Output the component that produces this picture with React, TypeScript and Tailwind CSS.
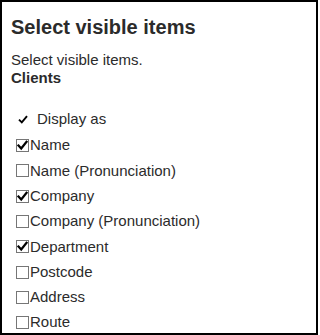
import React from "react";

const items: { label: string; checked: boolean }[] = [
  { label: "Name", checked: true },
  { label: "Name (Pronunciation)", checked: false },
  { label: "Company", checked: true },
  { label: "Company (Pronunciation)", checked: false },
  { label: "Department", checked: true },
  { label: "Postcode", checked: false },
  { label: "Address", checked: false },
  { label: "Route", checked: false },
];

function Box({ checked }: { checked: boolean }) {
  return (
    <span className="flex h-[13px] w-[13px] shrink-0 items-center justify-center border border-[#767676] bg-white">
      {checked && (
        <svg width="11" height="11" viewBox="0 0 11 11">
          <path d="M1.5 5.5 L4.2 8.5 L9.5 1.8" fill="none" stroke="#000" strokeWidth="2.2" strokeLinecap="square" strokeLinejoin="miter" />
        </svg>
      )}
    </span>
  );
}

export default function App() {
  return (
    <div
      className="box-border h-[335px] w-[318px] overflow-hidden border-2 border-black bg-white px-[9px] text-[#2b2b2b]"
      style={{ fontFamily: '"Liberation Sans", Arial, sans-serif' }}
    >
      <h2 className="mt-[13px] text-[20px] font-bold leading-[24px]">Select visible items</h2>
      <p className="mt-[12px] text-[15px] leading-[18px]">Select visible items.</p>
      <p className="text-[15px] font-bold leading-[18px]">Clients</p>
      <div className="mt-[20px] flex h-[25px] items-center text-[15px]">
        <svg className="ml-[7px] mr-[9px]" width="10" height="9" viewBox="0 0 10 9">
          <path d="M1 4.6 L3.8 7.4 L9 1.2" fill="none" stroke="#000" strokeWidth="1.9" />
        </svg>
        <span>Display as</span>
      </div>
      <div className="ml-[5px] mt-[1px] flex flex-col">
        {items.map((it) => (
          <label key={it.label} className="flex h-[25.3px] items-center text-[15px]">
            <Box checked={it.checked} />
            <span className="ml-[1px]">{it.label}</span>
          </label>
        ))}
      </div>
    </div>
  );
}
